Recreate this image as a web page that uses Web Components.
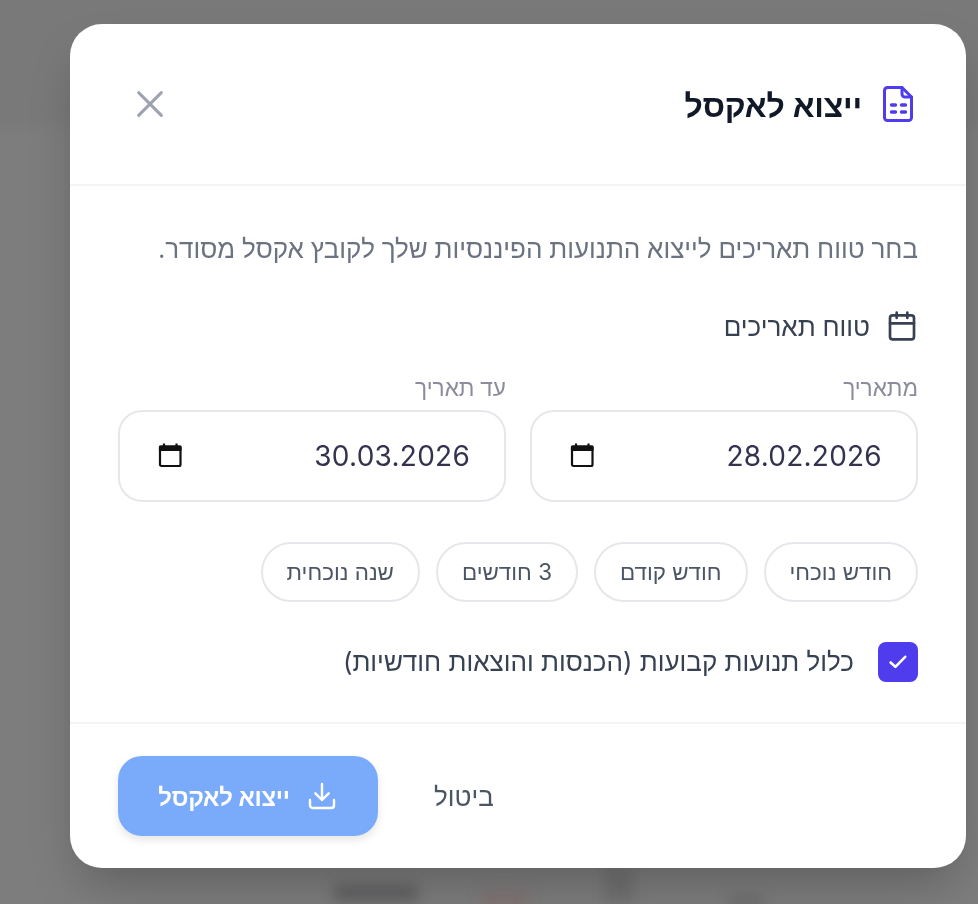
<!DOCTYPE html>
<html lang="he" dir="rtl">
<head>
<meta charset="utf-8">
<title>ייצוא לאקסל</title>
<style>
html, body { margin: 0; height: 100%; }
body { font-family: "Noto Sans", "Inter", sans-serif; background: #7d7d7d; overflow: hidden; }
</style>
</head>
<body>
<blurred-page></blurred-page>
<export-dialog>
	<date-field slot="dates" label="מתאריך" value="28.02.2026"></date-field>
	<date-field slot="dates" label="עד תאריך" value="30.03.2026"></date-field>
	<range-chip slot="chips">חודש נוכחי</range-chip>
	<range-chip slot="chips">חודש קודם</range-chip>
	<range-chip slot="chips">3 חודשים</range-chip>
	<range-chip slot="chips">שנה נוכחית</range-chip>
</export-dialog>
<script>
// the page behind the dialog, only a few blurred smudges
class BlurredPage extends HTMLElement {
	constructor() {
		super();
		this.attachShadow({ mode: 'open' });
		this.shadowRoot.innerHTML = `
		<style>
			:host { position: fixed; inset: 0; display: block; overflow: hidden; }
			.band { position: absolute; left: -20px; right: -20px; top: -20px; height: 146px; background: #797979; filter: blur(6px); }
			.smudge { position: absolute; filter: blur(7px); }
			.a { left: 334px; top: 884px; width: 84px; height: 18px; background: #626264; }
			.b { left: 480px; top: 890px; width: 50px; height: 24px; background: #807474; }
			.c { left: 604px; top: 868px; width: 30px; height: 36px; background: #707070; }
			.d { left: 728px; top: 896px; width: 36px; height: 14px; background: #6c6c6c; }
		</style>
		<div class="band"></div>
		<div class="smudge a"></div>
		<div class="smudge b"></div>
		<div class="smudge c"></div>
		<div class="smudge d"></div>`;
	}
}

class DateField extends HTMLElement {
	constructor() {
		super();
		this.attachShadow({ mode: 'open' });
		this.shadowRoot.innerHTML = `
		<style>
			:host { display: flex; flex-direction: column; gap: 8px; min-width: 0; }
			label { font-size: 22.6px; line-height: 28px; color: #8b8c9c; }
			.input {
				display: flex; align-items: center; justify-content: space-between;
				height: 88px; padding: 0 34px 0 38px;
				border: 2px solid #e5e7eb; border-radius: 24px; background: #fff;
			}
			.value { font-family: "Inter", sans-serif; font-size: 28px; letter-spacing: .25px; color: #33334f; direction: ltr; }
			svg { display: block; }
		</style>
		<label>${this.getAttribute('label')}</label>
		<div class="input">
			<span class="value">${this.getAttribute('value')}</span>
			<!-- same look as the browser's native date picker icon -->
			<svg width="24" height="26" viewBox="0 0 24 26" fill="none" stroke="#111" stroke-width="2.2" stroke-linejoin="round">
				<rect x="2" y="3.500" width="20.500" height="19.500" rx="1.500"/>
				<path d="M2 3.500h20.500v3.500H2z" fill="#111"/>
				<path d="M6 .5v3M18.500 .5v3"/>
			</svg>
		</div>`;
	}
}

class RangeChip extends HTMLElement {
	constructor() {
		super();
		this.attachShadow({ mode: 'open' });
		this.shadowRoot.innerHTML = `
		<style>
			:host {
				display: inline-flex; align-items: center; height: 56px; padding: 0 24px;
				border: 2px solid #e5e7eb; border-radius: 30px;
				font-family: "Inter", "Noto Sans", sans-serif;
				font-size: 22.4px; color: #4b5563; white-space: nowrap;
			}
		</style>
		<slot></slot>`;
	}
}

class ExportDialog extends HTMLElement {
	constructor() {
		super();
		this.attachShadow({ mode: 'open' });
		this.shadowRoot.innerHTML = `
		<style>
			:host {
				position: fixed; left: 70px; top: 24px; width: 896px; height: 844px;
				display: flex; flex-direction: column; box-sizing: border-box;
				background: #fff; border-radius: 32px; box-shadow: 0 25px 50px -12px rgba(0,0,0,.25);
			}
			header {
				height: 162px; box-sizing: border-box; padding: 0 48px;
				display: flex; align-items: center; justify-content: space-between;
				border-bottom: 2px solid #f3f4f6;
			}
			.title { display: flex; align-items: center; gap: 16px; }
			h2 { margin: 0; font-size: 32px; font-weight: 700; letter-spacing: -.2px; color: #111827; }
			.close { padding: 8px; margin-left: 4px; }
			main { flex: 1; padding: 40px 48px 0; display: flex; flex-direction: column; }
			.intro { margin: 0; font-size: 26px; line-height: 44px; color: #6b7280; }
			.range { margin-top: 40px; display: flex; align-items: center; gap: 16px; font-size: 26px; line-height: 32px; color: #374151; }
			.dates { margin-top: 32px; display: grid; grid-template-columns: 1fr 1fr; gap: 24px; }
			.chips { margin-top: 40px; display: flex; gap: 16px; }
			.check { margin-top: 40px; display: flex; align-items: center; gap: 24px; font-family: "Inter", "Noto Sans", sans-serif; font-size: 26px; color: #374151; }
			.box { width: 40px; height: 40px; border-radius: 8px; background: #4f3ded; display: flex; align-items: center; justify-content: center; }
			footer {
				height: 146px; box-sizing: border-box; padding: 32px 48px;
				display: flex; align-items: flex-start; justify-content: flex-end; gap: 16px; border-top: 2px solid #f3f4f6;
			}
			.cancel { padding: 0 40px; height: 80px; display: flex; align-items: center; justify-content: center; font-size: 26px; color: #4b5563; }
			.go {
				width: 260px; height: 80px; border-radius: 24px; background: #7aabfa; color: #fff;
				display: flex; align-items: center; justify-content: center; gap: 16px;
				font-size: 24px; font-weight: 700; letter-spacing: -.3px; box-shadow: 0 4px 8px rgba(0,0,0,.1);
			}
			svg { display: block; }
		</style>
		<header>
			<div class="title">
				<svg width="40" height="40" viewBox="0 0 40 40" fill="none" stroke="#4f3ded" stroke-width="3" stroke-linecap="round" stroke-linejoin="round">
					<path d="M24 3.500H9.500a3 3 0 0 0-3 3v27a3 3 0 0 0 3 3h21a3 3 0 0 0 3-3V13z"/>
					<path d="M24 3.500V10a3 3 0 0 0 3 3h6.500"/>
					<path d="M13.500 21h4M23.500 21h4M13.500 28h4M23.500 28h4" stroke-width="3.400"/>
				</svg>
				<h2>ייצוא לאקסל</h2>
			</div>
			<div class="close">
				<svg width="40" height="40" viewBox="0 0 24 24" fill="none" stroke="#9ca3af" stroke-width="1.800" stroke-linecap="round">
					<path d="M5.200 5.200l13.600 13.600M18.800 5.200 5.200 18.800"/>
				</svg>
			</div>
		</header>
		<main>
			<p class="intro">בחר טווח תאריכים לייצוא התנועות הפיננסיות שלך לקובץ אקסל מסודר.</p>
			<div class="range">
				<svg width="32" height="32" viewBox="0 0 24 24" fill="none" stroke="#374151" stroke-width="2" stroke-linecap="round" stroke-linejoin="round">
					<rect x="3" y="4" width="18" height="18" rx="2"/>
					<path d="M16 2v4M8 2v4M3 10h18"/>
				</svg>
				<span>טווח תאריכים</span>
			</div>
			<div class="dates"><slot name="dates"></slot></div>
			<div class="chips"><slot name="chips"></slot></div>
			<div class="check">
				<div class="box">
					<svg width="20" height="20" viewBox="0 0 20 20" fill="none" stroke="#fff" stroke-width="2.600" stroke-linecap="round" stroke-linejoin="round"><path d="M2.600 10.500 7.400 14.800 17.200 4.800"/></svg>
				</div>
				<span>כלול תנועות קבועות (הכנסות והוצאות חודשיות)</span>
			</div>
		</main>
		<footer>
			<div class="cancel">ביטול</div>
			<div class="go">
				<svg width="32" height="32" viewBox="0 0 24 24" fill="none" stroke="#fff" stroke-width="1.800" stroke-linecap="round" stroke-linejoin="round">
					<path d="M21 15v4a2 2 0 0 1-2 2H5a2 2 0 0 1-2-2v-4M7 10l5 5 5-5M12 15V3"/>
				</svg>
				<span>ייצוא לאקסל</span>
			</div>
		</footer>`;
	}
}

customElements.define('blurred-page', BlurredPage);
customElements.define('date-field', DateField);
customElements.define('range-chip', RangeChip);
customElements.define('export-dialog', ExportDialog);
</script>
</body>
</html>
